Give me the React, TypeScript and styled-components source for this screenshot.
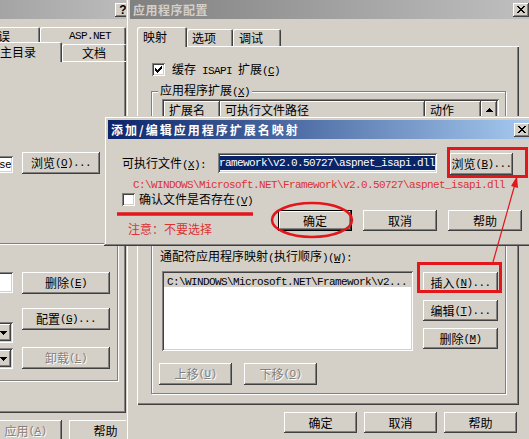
import styled, { createGlobalStyle } from "styled-components";

const FACE = "#d4d0c8";
const RED = "#e2161b";
const RED_TEXT = "#dc3232";

const raised = `inset -1px -1px #404040, inset 1px 1px #fff, inset -2px -2px #808080, inset 2px 2px ${FACE}`;
const sunken = `inset 1px 1px #808080, inset -1px -1px #fff, inset 2px 2px #404040, inset -2px -2px ${FACE}`;

const GlobalStyle = createGlobalStyle`
  * { box-sizing: border-box; }
  html, body { margin: 0; padding: 0; background: ${FACE}; }
  body {
    font-family: "Noto Sans CJK SC", "Liberation Sans", sans-serif;
    font-size: 12px;
    line-height: 14px;
    color: #000;
  }
`;

const Desktop = styled.div`
  position: relative;
  width: 529px;
  height: 439px;
  overflow: hidden;
  background: ${FACE};
`;

const Window = styled.section<{ $x: number; $y: number; $w: number; $h: number }>`
  position: absolute;
  left: ${(p) => p.$x}px;
  top: ${(p) => p.$y}px;
  width: ${(p) => p.$w}px;
  height: ${(p) => p.$h}px;
  padding: 4px;
  display: flex;
  flex-direction: column;
  background: ${FACE};
  box-shadow: inset -1px -1px #404040, inset 1px 1px ${FACE}, inset -2px -2px #808080, inset 2px 2px #fff;
`;

const TitleBar = styled.header<{ $active?: boolean }>`
  height: 19px;
  flex: none;
  display: flex;
  align-items: center;
  gap: 2px;
  padding: 0 2px 0 3px;
  background: ${(p) =>
    p.$active ? "linear-gradient(to right, #0a246a, #a6caf0)" : "linear-gradient(to right, #808080, #c0c0c0)"};
  color: ${(p) => (p.$active ? "#fff" : FACE)};
`;

const TitleText = styled.span<{ $spacing: number }>`
  flex: 1;
  font-weight: bold;
  letter-spacing: ${(p) => p.$spacing}px;
  white-space: nowrap;
  overflow: hidden;
`;

const CaptionButton = styled.span`
  width: 16px;
  height: 14px;
  flex: none;
  display: flex;
  align-items: center;
  justify-content: center;
  background: ${FACE};
  box-shadow: ${raised};
  color: #000;
  font: bold 12px/14px "Liberation Sans", sans-serif;
`;

const Body = styled.div<{ $pad: string }>`
  flex: 1;
  min-height: 0;
  display: flex;
  flex-direction: column;
  padding: ${(p) => p.$pad};
`;

const Mono = styled.span`
  font-family: "Liberation Mono", "DejaVu Sans Mono", monospace;
  font-size: 11px;
  letter-spacing: -0.6px;
`;

const TabRows = styled.div<{ $w: number }>`
  width: ${(p) => p.$w}px;
  flex: none;
  display: flex;
  flex-direction: column;
`;

const TabRow = styled.div<{ $h: number; $lift?: number; $z?: number }>`
  position: relative;
  z-index: ${(p) => p.$z ?? 1};
  height: ${(p) => p.$h}px;
  margin-top: ${(p) => -(p.$lift ?? 0)}px;
  flex: none;
  display: flex;
  justify-content: ${(p) => (p.$lift === undefined ? "flex-start" : "flex-end")};
  align-items: flex-end;
`;

const Tab = styled.div<{ $w: number; $active?: boolean; $center?: boolean; $indent?: number }>`
  width: ${(p) => p.$w}px;
  height: ${(p) => (p.$active ? "calc(100% + 1px)" : "calc(100% - 2px)")};
  margin-bottom: ${(p) => (p.$active ? -1 : 0)}px;
  flex: none;
  display: flex;
  align-items: center;
  justify-content: ${(p) => (p.$center ? "center" : "flex-start")};
  padding-left: ${(p) => p.$indent ?? 0}px;
  background: ${FACE};
  border-radius: 2px 2px 0 0;
  box-shadow: inset 1px 1px #fff, inset -1px 0 #404040, inset -2px 0 #808080;
  white-space: nowrap;
`;

const Panel = styled.div<{ $w: number; $h: number; $pad: string }>`
  width: ${(p) => p.$w}px;
  height: ${(p) => p.$h}px;
  flex: none;
  padding: ${(p) => p.$pad};
  background: ${FACE};
  box-shadow: inset 1px 1px #fff, inset -1px -1px #404040, inset -2px -2px #808080;
`;

const Group = styled.fieldset<{ $mt: number; $pad: string }>`
  margin: ${(p) => p.$mt}px 0 0;
  padding: ${(p) => p.$pad};
  min-width: 0;
  border: 1px solid #808080;
  box-shadow: inset 1px 1px #fff, 1px 1px #fff;
`;

const Legend = styled.legend`
  margin-left: -4px;
  padding: 0 2px;
  line-height: 14px;
  background: ${FACE};
  white-space: nowrap;
`;

const Button = styled.button<{ $w: number; $h: number; $mt?: number; $ml?: number; $default?: boolean }>`
  width: ${(p) => p.$w}px;
  height: ${(p) => p.$h}px;
  margin: ${(p) => p.$mt ?? 0}px 0 0 ${(p) => p.$ml ?? 0}px;
  flex: none;
  padding: 0;
  border: none;
  display: flex;
  align-items: center;
  justify-content: center;
  white-space: nowrap;
  font: inherit;
  background: ${FACE};
  color: ${(p) => (p.disabled ? "#808080" : "#000")};
  text-shadow: ${(p) => (p.disabled ? "1px 1px #fff" : "none")};
  box-shadow: ${(p) =>
    p.$default
      ? "inset 0 0 0 1px #000, inset -2px -2px #404040, inset 2px 2px #fff, inset -3px -3px #808080"
      : raised};
`;

const ButtonRow = styled.div<{ $mt: number; $pr?: number }>`
  margin-top: ${(p) => p.$mt}px;
  padding-right: ${(p) => p.$pr ?? 0}px;
  display: flex;
  justify-content: flex-end;
  gap: 7px;
  flex: none;
`;

const Field = styled.div<{ $w: number; $h: number; $mt?: number }>`
  width: ${(p) => p.$w}px;
  height: ${(p) => p.$h}px;
  margin-top: ${(p) => p.$mt ?? 0}px;
  flex: none;
  padding: 2px;
  display: flex;
  background: #fff;
  box-shadow: ${sunken};
`;

const FieldInner = styled.div<{ $end?: boolean }>`
  flex: 1;
  min-width: 0;
  overflow: hidden;
  display: flex;
  justify-content: ${(p) => (p.$end ? "flex-end" : "flex-start")};
  align-items: center;
  padding-left: ${(p) => (p.$end ? 0 : 2)}px;
  white-space: nowrap;
`;

const Selected = styled(Mono)`
  flex: none;
  background: #0a246a;
  color: #fff;
  line-height: 14px;
`;

const DropButton = styled.span`
  width: 16px;
  height: 17px;
  flex: none;
  display: flex;
  align-items: center;
  justify-content: center;
  background: ${FACE};
  box-shadow: ${raised};
`;

const CheckRow = styled.label<{ $gap: number; $mt?: number; $ml?: number }>`
  display: flex;
  align-items: center;
  gap: ${(p) => p.$gap}px;
  height: 13px;
  margin: ${(p) => p.$mt ?? 0}px 0 0 ${(p) => p.$ml ?? 0}px;
  flex: none;
  white-space: nowrap;
`;

const CheckBox = styled.span`
  width: 13px;
  height: 13px;
  flex: none;
  display: flex;
  align-items: center;
  justify-content: center;
  background: #fff;
  box-shadow: ${sunken};
`;

/* left window: site properties */

const PathRow = styled.div`
  display: flex;
  justify-content: flex-end;
  gap: 9px;
  padding-right: 18px;
`;

const Settings = styled.div`
  display: flex;
  justify-content: flex-end;
  gap: 9px;
`;

const Column = styled.div<{ $w: number }>`
  width: ${(p) => p.$w}px;
  display: flex;
  flex-direction: column;
`;

/* middle window: application configuration */

const ListBox = styled.div<{ $h: number }>`
  height: ${(p) => p.$h}px;
  padding: 2px;
  display: flex;
  background: #fff;
  box-shadow: ${sunken};
`;

const ListTable = styled.div`
  flex: 1;
  min-width: 0;
  overflow: hidden;
`;

const HeaderRow = styled.div`
  display: flex;
  height: 18px;
`;

const HeaderCell = styled.div<{ $w?: number }>`
  width: ${(p) => (p.$w ? `${p.$w}px` : "auto")};
  flex: ${(p) => (p.$w ? "none" : 1)};
  padding: 2px 0 0 5px;
  background: ${FACE};
  box-shadow: inset -1px -1px #404040, inset 1px 1px #fff, inset -2px -2px #808080;
  white-space: nowrap;
`;

const DataRow = styled.div`
  display: grid;
  grid-template-columns: 56px 205px 56px;
  height: 14px;
  white-space: nowrap;
  overflow: hidden;
  & > * {
    padding-left: 5px;
    overflow: hidden;
  }
`;

const ScrollBar = styled.div`
  width: 16px;
  flex: none;
  display: flex;
  flex-direction: column;
  background: repeating-conic-gradient(#fff 0 25%, ${FACE} 0 50%) 0 0 / 2px 2px;
`;

const ScrollButton = styled.span`
  height: 17px;
  flex: none;
  display: flex;
  align-items: center;
  justify-content: center;
  background: ${FACE};
  box-shadow: ${raised};
  &:last-child {
    margin-top: auto;
  }
`;

const ActionRow = styled.div`
  margin-top: 6px;
  display: flex;
  justify-content: flex-end;
  gap: 7px;
`;

const SectionLabel = styled.div`
  margin: 12px 0 0 -2px;
  white-space: nowrap;
`;

const WildRow = styled.div`
  margin-top: 6px;
  display: flex;
  gap: 10px;
`;

const WildList = styled.div`
  width: 251px;
  height: 80px;
  padding: 2px;
  background: #fff;
  box-shadow: ${sunken};
`;

const ListItem = styled.div`
  height: 14px;
  padding-left: 3px;
  background: ${FACE};
  white-space: nowrap;
  overflow: hidden;
`;

const StackedButtons = styled.div`
  padding-top: 1px;
  display: flex;
  flex-direction: column;
  gap: 7px;
`;

const MoveRow = styled.div`
  margin: 12px 0 0 -3px;
  display: flex;
  gap: 12px;
`;

/* front dialog */

const FileRow = styled.div`
  display: flex;
  align-items: flex-start;
  height: 22px;
  flex: none;
`;

const FieldLabel = styled.span<{ $w: number }>`
  width: ${(p) => p.$w}px;
  flex: none;
  line-height: 20px;
  white-space: nowrap;
`;

const RedPath = styled(Mono)`
  display: block;
  margin: 4px 0 0 11px;
  line-height: 12px;
  color: ${RED_TEXT};
  white-space: nowrap;
`;

const DialogFooter = styled.div`
  margin-top: 4px;
  display: flex;
  align-items: flex-start;
`;

const Note = styled.span`
  margin: 12px 0 0 6px;
  width: 84px;
  flex: none;
  color: ${RED_TEXT};
  white-space: nowrap;
`;

const ButtonGroup = styled.div<{ $ml: number }>`
  margin-left: ${(p) => p.$ml}px;
  display: flex;
  gap: 11px;
`;

const Overlay = styled.svg`
  position: absolute;
  left: 0;
  top: 0;
  pointer-events: none;
`;

const PixelIcon = ({ rows }: { rows: string[] }) => (
  <svg width={rows[0].length} height={rows.length} shapeRendering="crispEdges">
    {rows.flatMap((r, y) =>
      [...r].map((c, x) => (c === "X" ? <rect key={`${x}-${y}`} x={x} y={y} width={1} height={1} fill="#000" /> : null))
    )}
  </svg>
);

const CLOSE = ["XX....XX", ".XX..XX.", "..XXXX..", "...XX...", "..XXXX..", ".XX..XX.", "XX....XX"];
const CHECK = ["......X", ".....XX", "X...XXX", "XX.XXX.", "XXXXX..", ".XXX...", "..X...."];
const UP = ["...X...", "..XXX..", ".XXXXX.", "XXXXXXX"];
const DOWN = ["XXXXXXX", ".XXXXX.", "..XXX..", "...X..."];

const Key = ({ k }: { k: string }) => (
  <Mono>
    (<u>{k}</u>)
  </Mono>
);

const Dots = () => <Mono>...</Mono>;

const extensions = [
  [".asa", "C:\\WINDOWS\\system32\\inetsrv\\asp.dll", "GET,HEAD,POST,TRACE"],
  [".asax", "C:\\WINDOWS\\Microsoft.NET\\Framework\\v2.0.50727\\aspnet_isapi.dll", "GET,HEAD,POST,DEBUG"],
  [".ascx", "C:\\WINDOWS\\Microsoft.NET\\Framework\\v2.0.50727\\aspnet_isapi.dll", "GET,HEAD,POST,DEBUG"],
];

const SiteProperties = () => (
  <Window $x={-200} $y={-4} $w={355} $h={448}>
    <TitleBar>
      <TitleText $spacing={0.5}>默认网站 属性</TitleText>
      <CaptionButton>?</CaptionButton>
      <CaptionButton>
        <PixelIcon rows={CLOSE} />
      </CaptionButton>
    </TitleBar>
    <Body $pad="6px 9px 0 6px">
      <TabRows $w={316}>
        <TabRow $h={19} $lift={0}>
          <Tab $w={62} $center>目录安全性</Tab>
          <Tab $w={50} $center>HTTP 头</Tab>
          <Tab $w={120} $center>自定义错误</Tab>
          <Tab $w={86} $center $indent={14}>
            <Mono>ASP.NET</Mono>
          </Tab>
        </TabRow>
        <TabRow $h={19} $lift={2} $z={2}>
          <Tab $w={40} $center>网站</Tab>
          <Tab $w={40} $center>性能</Tab>
          <Tab $w={76} $center>ISAPI 筛选器</Tab>
          <Tab $w={88} $center $active>主目录</Tab>
          <Tab $w={64} $center>文档</Tab>
        </TabRow>
      </TabRows>
      <Panel $w={316} $h={352} $pad="91px 8px 0 8px">
        <PathRow>
          <Field $w={150} $h={17} $mt={4}>
            <FieldInner $end>
              <Mono>C:\Inetpub\wwwroot\course</Mono>
            </FieldInner>
          </Field>
          <Button $w={78} $h={22}>
            浏览<Key k="O" />
            <Dots />
          </Button>
        </PathRow>
        <Group $mt={62} $pad="22px 7px 11px 10px">
          <Legend>应用程序设置</Legend>
          <Settings>
            <Column $w={150}>
              <Field $w={150} $h={21}>
                <FieldInner>默认应用程序</FieldInner>
              </Field>
              <Field $w={150} $h={21} $mt={29}>
                <FieldInner>纯脚本</FieldInner>
                <DropButton>
                  <PixelIcon rows={DOWN} />
                </DropButton>
              </Field>
              <Field $w={150} $h={21} $mt={5}>
                <FieldInner>DefaultAppPool</FieldInner>
                <DropButton>
                  <PixelIcon rows={DOWN} />
                </DropButton>
              </Field>
            </Column>
            <Column $w={88}>
              <Button $w={88} $h={22}>
                删除<Key k="E" />
              </Button>
              <Button $w={88} $h={22} $mt={14}>
                配置<Key k="G" />
                <Dots />
              </Button>
              <Button $w={88} $h={22} $mt={17} disabled>
                卸载<Key k="L" />
              </Button>
            </Column>
          </Settings>
        </Group>
      </Panel>
      <ButtonRow $mt={7}>
        <Button $w={73} $h={21}>确定</Button>
        <Button $w={73} $h={21}>取消</Button>
        <Button $w={73} $h={21} disabled>
          应用<Key k="A" />
        </Button>
        <Button $w={73} $h={21}>帮助</Button>
      </ButtonRow>
    </Body>
  </Window>
);

const AppConfig = () => (
  <Window $x={126} $y={-4} $w={409} $h={448}>
    <TitleBar>
      <TitleText $spacing={0.5}>应用程序配置</TitleText>
      <CaptionButton>
        <PixelIcon rows={CLOSE} />
      </CaptionButton>
    </TitleBar>
    <Body $pad="8px 12px 0 7px">
      <TabRow $h={19}>
        <Tab $w={50} $indent={6} $active>映射</Tab>
        <Tab $w={46} $indent={5}>选项</Tab>
        <Tab $w={48} $indent={6}>调试</Tab>
      </TabRow>
      <Panel $w={382} $h={359} $pad="17px 13px 0 14px">
        <CheckRow $gap={7} $ml={1}>
          <CheckBox>
            <PixelIcon rows={CHECK} />
          </CheckBox>
          <span>
            缓存<Mono> ISAPI </Mono>扩展<Key k="C" />
          </span>
        </CheckRow>
        <Group $mt={7} $pad="0 6px 8px 10px">
          <Legend>
            应用程序扩展<Key k="X" />
          </Legend>
          <ListBox $h={110}>
            <ListTable>
              <HeaderRow>
                <HeaderCell $w={56}>扩展名</HeaderCell>
                <HeaderCell $w={205}>可执行文件路径</HeaderCell>
                <HeaderCell>动作</HeaderCell>
              </HeaderRow>
              {extensions.map(([ext, path, verbs]) => (
                <DataRow key={ext}>
                  <Mono>{ext}</Mono>
                  <Mono>{path}</Mono>
                  <Mono>{verbs}</Mono>
                </DataRow>
              ))}
            </ListTable>
            <ScrollBar>
              <ScrollButton>
                <PixelIcon rows={UP} />
              </ScrollButton>
              <ScrollButton>
                <PixelIcon rows={DOWN} />
              </ScrollButton>
            </ScrollBar>
          </ListBox>
          <ActionRow>
            <Button $w={75} $h={22}>
              添加<Key k="D" />
              <Dots />
            </Button>
            <Button $w={75} $h={22}>
              编辑<Key k="I" />
              <Dots />
            </Button>
            <Button $w={75} $h={22}>
              删除<Key k="R" />
            </Button>
          </ActionRow>
          <SectionLabel>
            通配符应用程序映射<Mono>(</Mono>执行顺序<Mono>)</Mono>
            <Key k="W" />
            <Mono>:</Mono>
          </SectionLabel>
          <WildRow>
            <WildList>
              <ListItem>
                <Mono>C:\WINDOWS\Microsoft.NET\Framework\v2...</Mono>
              </ListItem>
            </WildList>
            <StackedButtons>
              <Button $w={75} $h={21}>
                插入<Key k="N" />
                <Dots />
              </Button>
              <Button $w={75} $h={21}>
                编辑<Key k="T" />
                <Dots />
              </Button>
              <Button $w={75} $h={21}>
                删除<Key k="M" />
              </Button>
            </StackedButtons>
          </WildRow>
          <MoveRow>
            <Button $w={73} $h={22} disabled>
              上移<Key k="U" />
            </Button>
            <Button $w={73} $h={22} disabled>
              下移<Key k="O" />
            </Button>
          </MoveRow>
        </Group>
      </Panel>
      <ButtonRow $mt={7} $pr={2}>
        <Button $w={73} $h={21}>确定</Button>
        <Button $w={73} $h={21}>取消</Button>
        <Button $w={73} $h={21}>帮助</Button>
      </ButtonRow>
    </Body>
  </Window>
);

const MappingDialog = () => (
  <Window $x={104} $y={116} $w={432} $h={130}>
    <TitleBar $active>
      <TitleText $spacing={2}>添加/编辑应用程序扩展名映射</TitleText>
      <CaptionButton>
        <PixelIcon rows={CLOSE} />
      </CaptionButton>
    </TitleBar>
    <Body $pad="14px 0 0 14px">
      <FileRow>
        <FieldLabel $w={96}>
          可执行文件<Key k="X" />
          <Mono>:</Mono>
        </FieldLabel>
        <Field $w={219} $h={20}>
          <FieldInner $end>
            <Selected>C:\WINDOWS\Microsoft.NET\Framework\v2.0.50727\aspnet_isapi.dll</Selected>
          </FieldInner>
        </Field>
        <Button $w={63} $h={22} $ml={13}>
          浏览<Key k="B" />
          <Dots />
        </Button>
      </FileRow>
      <RedPath>C:\WINDOWS\Microsoft.NET\Framework\v2.0.50727\aspnet_isapi.dll</RedPath>
      <CheckRow $gap={4} $mt={2}>
        <CheckBox />
        <span>
          确认文件是否存在<Key k="V" />
        </span>
      </CheckRow>
      <DialogFooter>
        <Note>注意：不要选择</Note>
        <ButtonGroup $ml={66}>
          <Button $w={74} $h={21} $default>
            确定
          </Button>
          <Button $w={74} $h={21}>取消</Button>
          <Button $w={74} $h={21}>帮助</Button>
        </ButtonGroup>
      </DialogFooter>
    </Body>
  </Window>
);

// red marks someone drew over the screenshot
const Annotations = () => (
  <Overlay width={529} height={439} viewBox="0 0 529 439">
    <rect x={448.5} y={148.5} width={78} height={28} fill="none" stroke={RED} strokeWidth={3} />
    <rect x={418.5} y={263.5} width={82} height={28} fill="none" stroke={RED} strokeWidth={3} />
    <ellipse cx={312} cy={220} rx={40} ry={17} fill="none" stroke={RED} strokeWidth={2.5} />
    <line x1={117} y1={214} x2={253} y2={214} stroke={RED} strokeWidth={3.5} />
    <line x1={493} y1={262} x2={515} y2={184} stroke={RED} strokeWidth={1.2} />
    <polygon points="517,176 518,188 511,186" fill={RED} />
  </Overlay>
);

export default function App() {
  return (
    <>
      <GlobalStyle />
      <Desktop>
        <SiteProperties />
        <AppConfig />
        <MappingDialog />
        <Annotations />
      </Desktop>
    </>
  );
}
